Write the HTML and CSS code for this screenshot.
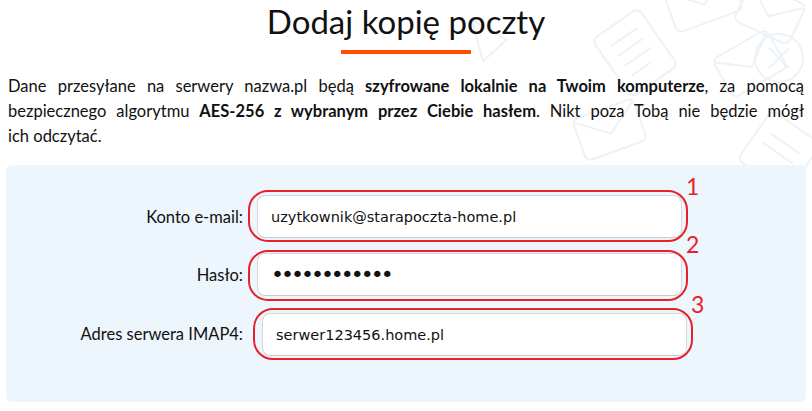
FILE: index.html
```html
<!DOCTYPE html>
<html lang="pl">

<head>
    <meta charset="UTF-8">
    <title>Dodaj kopię poczty</title>
    <link rel="stylesheet" href="styles.css">
</head>

<body>
    <div class="pattern" aria-hidden="true">
        <svg width="380" height="411" viewBox="0 0 380 411" fill="none" stroke="#edf2f7" stroke-width="2" stroke-linejoin="round">
            <!-- koperty i dokumenty w tle -->
            <g transform="translate(230 -10) rotate(-20)">
                <rect x="0" y="0" width="70" height="46" rx="6"/>
                <path d="M2 4 L35 28 L68 4"/>
            </g>
            <g transform="translate(320 -20) rotate(25)">
                <rect x="0" y="0" width="60" height="44" rx="6"/>
                <path d="M2 4 L30 26 L58 4"/>
            </g>
            <g transform="translate(160 40) rotate(-35)">
                <rect x="0" y="0" width="56" height="70" rx="6"/>
                <path d="M12 16 H44 M12 28 H44 M12 40 H44 M12 52 H34"/>
            </g>
            <g transform="translate(280 60) rotate(-30)">
                <rect x="0" y="0" width="62" height="44" rx="6"/>
                <path d="M2 4 L31 26 L60 4"/>
            </g>
            <circle cx="347" cy="58" r="24"/>
            <path d="M337 48 L357 68 M357 48 L337 68"/>
            <g transform="translate(40 20) rotate(30)">
                <path d="M0 0 L40 0 L30 30 Z"/>
            </g>
            <g transform="translate(140 120) rotate(-20)">
                <rect x="0" y="0" width="64" height="44" rx="6"/>
                <path d="M2 4 L32 26 L62 4"/>
            </g>
            <g transform="translate(340 110) rotate(35)">
                <rect x="0" y="0" width="60" height="60" rx="6"/>
                <path d="M12 20 H48 M12 32 H48"/>
            </g>
        </svg>
    </div>

    <div class="page">
        <h1 class="title">Dodaj kopię poczty</h1>
        <div class="title-bar"></div>

        <p class="intro">Dane przesyłane na serwery nazwa.pl będą <b>szyfrowane lokalnie na Twoim komputerze</b>, za pomocą bezpiecznego algorytmu <b>AES-256 z wybranym przez Ciebie hasłem</b>. Nikt poza Tobą nie będzie mógł ich&nbsp;odczytać.</p>

        <div class="panel">
            <form class="form">
                <label class="form-label" for="konto">Konto e-mail:</label>
                <div class="field field-1">
                    <input class="form-input" type="text" id="konto" value="uzytkownik@starapoczta-home.pl">
                    <span class="mark"></span>
                    <span class="mark-num">1</span>
                </div>

                <label class="form-label" for="haslo">Hasło:</label>
                <div class="field field-2">
                    <input class="form-input form-password" type="password" id="haslo" value="abcdefghijkl">
                    <span class="mark"></span>
                    <span class="mark-num">2</span>
                </div>

                <label class="form-label" for="serwer">Adres serwera IMAP4:</label>
                <div class="field field-3">
                    <input class="form-input" type="text" id="serwer" value="serwer123456.home.pl">
                    <span class="mark"></span>
                    <span class="mark-num">3</span>
                </div>
            </form>
        </div>
    </div>
</body>

</html>
```

FILE: styles.css
```css
body {
    margin: 0;
    font-family: Lato, "Open Sans", sans-serif;
    color: #111;
    background: #fff;
}

.pattern {
    position: absolute;
    top: 0;
    right: 0;
    z-index: 0;
}

.page {
    position: relative;
    z-index: 1;
    padding: 0 6px;
}

.title {
    margin: 0;
    padding-top: 2px;
    text-align: center;
    font-size: 33px;
    font-weight: 400;
    line-height: 38px;
}

.title-bar {
    width: 130px;
    height: 4px;
    margin: 10px auto 0;
    background: #ff5000;
}

.intro {
    margin: 20px 2px 0;
    font-size: 16.5px;
    line-height: 25px;
    text-align: justify;
}

.intro b {
    font-weight: 700;
}

.panel {
    margin-top: 16px;
    padding: 30px 0 46px;
    background: #eef6fd;
    border-radius: 6px;
}

.form {
    display: grid;
    grid-template-columns: 237px auto;
    justify-content: start;
    align-items: center;
    row-gap: 15px;
    column-gap: 14px;
}

.form-label {
    grid-column: 1;
    text-align: right;
    font-size: 16.5px;
    white-space: nowrap;
}

.field {
    position: relative;
    width: 425px;
}

.field-3 {
    margin-left: 5px;
    margin-top: 2px;
}

.form-input {
    box-sizing: border-box;
    display: block;
    width: 100%;
    height: 43px;
    padding: 0 13px;
    border: 1px solid #d3d7db;
    border-bottom-color: #c8ccd0;
    border-radius: 8px;
    background: #fff;
    font-family: "DejaVu Sans", Verdana, sans-serif;
    font-size: 14.5px;
    color: #111;
    outline: none;
}

.form-password {
    font-size: 22px;
    letter-spacing: -3px;
}

.mark {
    position: absolute;
    top: -5px;
    left: -9px;
    right: -6px;
    bottom: -4px;
    border: 2px solid #e8202a;
    border-radius: 20px;
    pointer-events: none;
}

.field-2 .mark {
    top: -3px;
    bottom: -5px;
}

.mark-num {
    position: absolute;
    top: -22px;
    left: calc(100% + 4px);
    font-size: 23px;
    line-height: 26px;
    color: #e8202a;
}
```
